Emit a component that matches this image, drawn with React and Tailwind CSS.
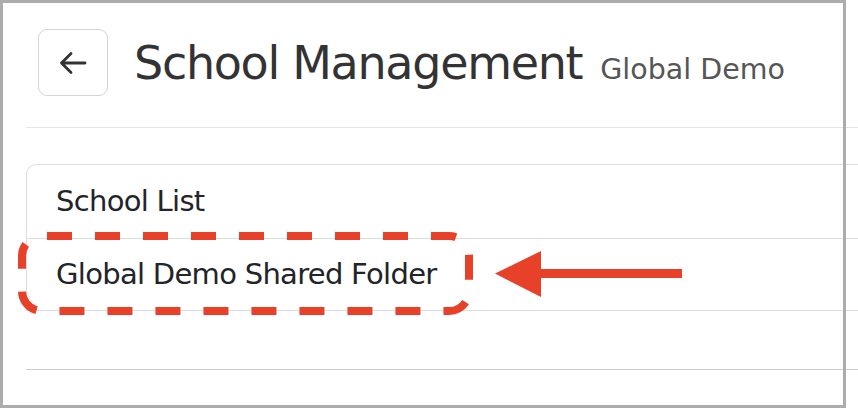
export default function App() {
  const font = { fontFamily: '"DejaVu Sans", "Liberation Sans", sans-serif' };

  return (
    <div className="relative w-[858px] h-[414px] bg-white overflow-hidden" style={font}>
      {/* header */}
      <div className="ml-[26px] h-[128px] border-b border-[#e6e6e6] pt-[29px] pl-[12px]">
        <div className="flex items-center">
          <button
            type="button"
            className="w-[70px] h-[67px] flex items-center justify-center rounded-[9px] border border-[#d4d4d4] bg-white"
          >
            <svg width="28" height="24" viewBox="0 0 28 24" fill="none">
              <path
                d="M26 12H2.5M12 2.5L2.5 12L12 21.5"
                stroke="#333"
                strokeWidth="2.8"
                strokeLinecap="round"
                strokeLinejoin="round"
              />
            </svg>
          </button>
          <div className="ml-[26px] flex items-baseline">
            <h1 className="text-[46px] leading-none tracking-[-1.3px] text-[#333] font-normal">
              School Management
            </h1>
            <span className="ml-[18px] text-[28.5px] leading-none text-[#565656]">Global Demo</span>
          </div>
        </div>
      </div>

      {/* list card */}
      <div className="mt-[36px] ml-[26px] border-l border-t border-[#dedede] rounded-tl-[10px]">
        <div className="h-[74px] flex items-center pl-[29px] border-b border-[#dedede]">
          <span className="text-[29px] leading-none tracking-[-0.7px] text-[#212428]">School List</span>
        </div>
        <div className="h-[72px] flex items-center pl-[29px] border-b border-[#dedede]">
          <span className="text-[29px] leading-none tracking-[-0.7px] text-[#212428]">
            Global Demo Shared Folder
          </span>
        </div>
      </div>

      <div className="mt-[58px] ml-[26px] border-t border-[#cccccc]" />

      {/* screenshot frame */}
      <div className="absolute top-0 left-0 w-[846px] h-[408px] border-[3px] border-[#acacac] pointer-events-none" />

      {/* annotation */}
      <svg className="absolute top-0 left-0 pointer-events-none" width="858" height="414">
        <rect
          x="22"
          y="236"
          width="447"
          height="75"
          rx="20"
          fill="none"
          stroke="#e8412a"
          strokeWidth="8"
          strokeDasharray="25 23"
          strokeDashoffset="43"
        />
        <line x1="535" y1="273.5" x2="682" y2="273.5" stroke="#e8412a" strokeWidth="9" />
        <polygon points="495,273.5 541,251 541,297" fill="#e8412a" />
      </svg>
    </div>
  );
}
